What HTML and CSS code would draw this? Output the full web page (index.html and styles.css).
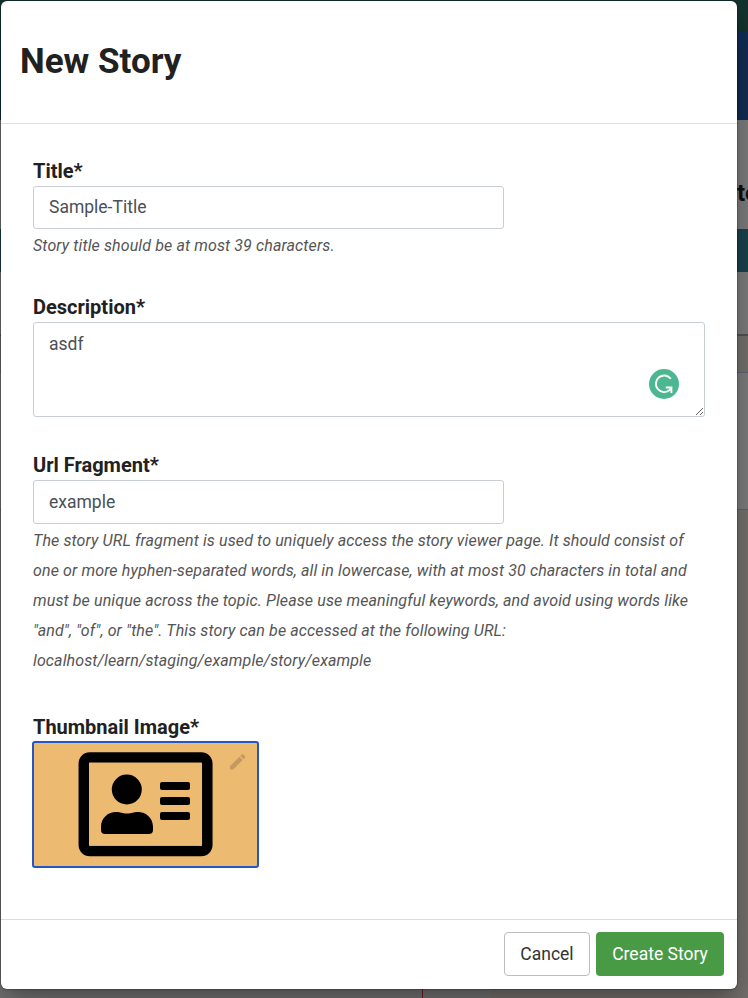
FILE: index.html
```html
<!DOCTYPE html>
<html lang="en">
<head>
<meta charset="utf-8">
<title>New Story</title>
<link rel="stylesheet" href="styles.css">
</head>
<body>
<div class="backdrop" aria-hidden="true">
  <div class="bar-top"></div>
  <div class="bar-nav"></div>
  <div class="panel">
    <div class="panel-heading">te</div>
    <div class="panel-action"></div>
  </div>
  <div class="card"></div>
  <div class="lower"></div>
</div>
<form class="modal">
  <header class="modal-header"><h1>New Story</h1></header>
  <main class="modal-body">
    <section class="field title-field">
      <label for="title">Title*</label>
      <input id="title" class="control" type="text" value="Sample-Title">
      <p class="help">Story title should be at most 39 characters.</p>
    </section>
    <section class="field description-field">
      <label for="description">Description*</label>
      <div class="area-wrap">
        <textarea id="description" class="control area">asdf</textarea>
        <svg class="assistant" viewBox="0 0 30 30"><circle cx="15" cy="15" r="15" fill="#4db791"/><path d="M21.8 9.8A8.300 8.300 0 1 0 20.800 20.900L22.200 19" fill="none" stroke="#fff" stroke-width="1.9"/><path d="M16.800 18.500H22.400V24" fill="none" stroke="#fff" stroke-width="1.900"/></svg>
      </div>
    </section>
    <section class="field url-field">
      <label for="url">Url Fragment*</label>
      <input id="url" class="control" type="text" value="example">
      <p class="help">The story URL fragment is used to uniquely access the story viewer page. It should consist of<br>one or more hyphen-separated words, all in lowercase, with at most 30 characters in total and<br>must be unique across the topic. Please use meaningful keywords, and avoid using words like<br>"and", "of", or "the". This story can be accessed at the following URL:<br>localhost/learn/staging/example/story/example</p>
    </section>
    <section class="field">
      <label>Thumbnail Image*</label>
      <div class="thumbnail">
        <svg viewBox="0 0 223 123">
          <rect x="49.8" y="14.5" width="123.500" height="93.500" rx="6" fill="none" stroke="#000" stroke-width="10.500"/>
          <rect x="55" y="19.700" width="113" height="83" fill="#edba72"/>
          <circle cx="92.800" cy="46.500" r="15"/>
          <path d="M67 84C67 75 74 69 82 69C87 69 88 70.500 93 70.500C98 70.500 99 69 104 69C112 69 119 75 119 84V87Q119 91 115 91H71Q67 91 67 87Z"/>
          <rect x="126" y="39" width="30" height="8" rx="2"/><rect x="126" y="54" width="30" height="8" rx="2"/><rect x="126" y="69" width="30" height="8" rx="2"/>
          <g transform="translate(193.300 8.500) scale(.86)" fill="#c49a61"><path d="M3 17.250V21h3.750L17.810 9.940l-3.750-3.750L3 17.250zM20.710 7.040a1 1 0 0 0 0-1.410l-2.340-2.340a1 1 0 0 0-1.410 0l-1.830 1.830 3.750 3.750 1.830-1.830z"/></g>
        </svg>
      </div>
    </section>
  </main>
  <footer class="modal-footer">
    <button class="button cancel" type="button">Cancel</button>
    <button class="button create" type="button">Create Story</button>
  </footer>
</form>
</body>
</html>
```
FILE: styles.css
```css
* { box-sizing: border-box; }
body {
  margin: 0;
  height: 998px;
  position: relative;
  overflow: hidden;
  background: #777470;
  font-family: Roboto, sans-serif;
  color: #212121;
}
.backdrop { height: 998px; display: flex; flex-direction: column; }
.bar-top { height: 32px; background: #153530; }
.bar-nav { height: 88px; background: #132f57; box-shadow: 0 1px 3px #333; }
.panel { height: 216px; padding-top: 58px; background: #808080; border-bottom: 2px solid #555; margin-bottom: 36px; }
.panel-heading { height: 51px; padding-left: 737px; font-size: 24px; line-height: 30px; font-weight: 700; color: #111; }
.panel-action { height: 43px; background: #1b4550; }
.card { height: 138px; background: #808080; border: 1px solid #626470; border-width: 1px 0; }
.lower { margin-top: auto; height: 488px; width: 491px; background: linear-gradient(90deg, #777 422px, #6b2024 422px, #6b2024 423px, #777 423px); }
.modal {
  position: absolute;
  left: 1px;
  top: 1px;
  width: 736px;
  height: 988px;
  display: flex;
  flex-direction: column;
  background: #fff;
  border-radius: 6px;
  box-shadow: 0 0 2px rgba(0, 0, 0, .7), 0 11px 15px -7px rgba(0, 0, 0, .2), 0 24px 38px 3px rgba(0, 0, 0, .14), 0 9px 46px 8px rgba(0, 0, 0, .12);
}
.modal-header { height: 123px; padding: 40px 19px 0; border-bottom: 1px solid #dee0e2; }
h1 { margin: 0; font-size: 35px; line-height: 41px; font-weight: 700; }
.modal-body { flex: 1; padding: 34px 32px 0; }
label { display: block; height: 28px; font-size: 20px; line-height: 27px; font-weight: 700; }
.title-field { height: 136px; }
.description-field { height: 158px; }
.url-field { height: 262px; }
.control {
  display: block;
  width: 471px;
  height: 43px;
  padding: 0 15px 1px;
  border: 1px solid #c9cdd5;
  border-radius: 3px;
  outline: 0;
  background: #fff;
  color: #495057;
  font: 17.5px/24px Roboto, sans-serif;
}
.url-field .control { height: 44px; }
.area-wrap { position: relative; width: 672px; }
.area { width: 672px; height: 95px; padding-top: 9px; resize: vertical; overflow: hidden; }
.assistant { position: absolute; width: 30px; height: 30px; left: 616px; top: 47px; }
.help { margin: 2px 0 0; font-size: 16px; line-height: 30px; letter-spacing: .118px; font-style: italic; color: #555; white-space: nowrap; }
.thumbnail { width: 227px; height: 127px; margin: -1px 0 0 -1px; border: 2px solid #2456c4; border-radius: 3px; background: #edba72; }
.thumbnail svg { display: block; width: 223px; height: 123px; }
.modal-footer { height: 70px; display: flex; justify-content: flex-end; gap: 6px; padding: 12px 13px 0; border-top: 1px solid #dcdcdc; }
.button { height: 44px; padding: 0; border: 0; border-radius: 4px; font: 17.5px/24px Roboto, sans-serif; }
.cancel { width: 86px; border: 1px solid #bdbdbd; background: #fff; color: #333; }
.create { width: 128px; background: #489a45; color: #fff; }
```
